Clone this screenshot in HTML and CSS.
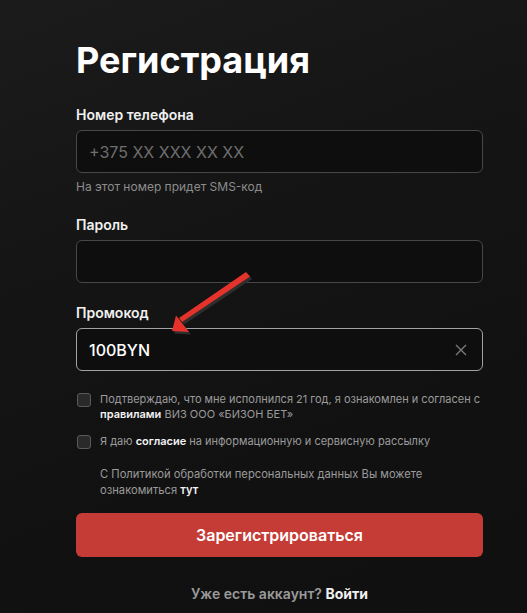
FILE: index.html
```html
<!DOCTYPE html>
<html lang="ru">
<head>
<meta charset="utf-8">
<title>Регистрация</title>
<link rel="stylesheet" href="styles.css">
</head>
<body>
<main class="page">
  <form class="form">
    <h1 class="title">Регистрация</h1>

    <div class="field">
      <label class="label">Номер телефона</label>
      <div class="input"><span class="placeholder">+375 XX XXX XX XX</span></div>
      <p class="hint">На этот номер придет SMS-код</p>
    </div>

    <div class="field">
      <label class="label">Пароль</label>
      <div class="input"></div>
    </div>

    <div class="field">
      <label class="label">Промокод</label>
      <div class="input input-active">
        <span class="value">100BYN</span>
        <svg class="clear" width="14" height="14" viewBox="0 0 14 14"><path d="M2 2L12 12M12 2L2 12" stroke="#7a7a7a" stroke-width="1.4" fill="none"/></svg>
      </div>
    </div>

    <div class="checks">
      <div class="check">
        <span class="box"></span>
        <p class="check-text">Подтверждаю, что мне исполнился 21 год, я ознакомлен и согласен с <b>правилами</b> ВИЗ ООО «БИЗОН БЕТ»</p>
      </div>
      <div class="check">
        <span class="box"></span>
        <p class="check-text">Я даю <b>согласие</b> на информационную и сервисную рассылку</p>
      </div>
      <p class="policy">С Политикой обработки персональных данных Вы можете ознакомиться <b>тут</b></p>
    </div>

    <button type="button" class="submit">Зарегистрироваться</button>

    <p class="login">Уже есть аккаунт? <b>Войти</b></p>
  </form>

  <svg class="arrow" width="527" height="613" viewBox="0 0 527 613">
    <g transform="translate(2,2.5)" fill="#2e2e2e">
      <path d="M246 272 L250 276.5 L182 322 L179 318 Z"/>
      <path d="M172 331 L176 315.5 L189 332 Z"/>
    </g>
    <g fill="#e5332c">
      <path d="M246 272 L250 276.5 L182 322 L179 318 Z"/>
      <path d="M172 331 L176 315.5 L189 332 Z"/>
    </g>
  </svg>
</main>
</body>
</html>
```
FILE: styles.css
```css
* { box-sizing: border-box; }
html, body { margin: 0; padding: 0; }
body {
  background: linear-gradient(160deg, #1b1b1b 0%, #151515 35%, #111111 70%, #101010 100%);
  font-family: Inter, "Noto Sans", "DejaVu Sans", sans-serif;
  color: #f2f2f2;
  min-height: 613px;
}
.page {
  position: relative;
  width: 527px;
  height: 613px;
  overflow: hidden;
}
.form {
  width: 407px;
  margin-left: 76px;
  padding-top: 38px;
  display: flex;
  flex-direction: column;
}
.title {
  margin: 0 0 23px;
  font-size: 36px;
  line-height: 44px;
  font-weight: 700;
  color: #ffffff;
}
.field {
  display: flex;
  flex-direction: column;
  margin-bottom: 20px;
}
.label {
  font-size: 14px;
  line-height: 20px;
  font-weight: 600;
  color: #f0f0f0;
  margin-bottom: 5px;
}
.input {
  height: 43px;
  border: 1px solid #474747;
  border-radius: 6px;
  background: #0e0e0e;
  display: flex;
  align-items: center;
  padding: 0 14px 0 12px;
  font-size: 16px;
}
.input-active { border-color: #a3a3a3; }
.placeholder { color: #6e6e6e; }
.value { color: #ffffff; flex: 1; font-weight: 500; }
.clear { display: block; }
.hint {
  margin: 6px 0 0;
  font-size: 12px;
  line-height: 16px;
  color: #8c8c8c;
}
.checks {
  display: flex;
  flex-direction: column;
  margin-top: 1px;
}
.check {
  display: flex;
  align-items: flex-start;
  gap: 9px;
  margin-bottom: 12px;
}
.box {
  flex: none;
  width: 14px;
  height: 14px;
  margin-top: 1px;
  margin-left: 1px;
  border: 1px solid #5a5a5a;
  border-radius: 3px;
  background: #2a2a2a;
}
.check-text {
  margin: 0;
  font-size: 11px;
  line-height: 15px;
  color: #9b9b9b;
}
.policy {
  margin: 5px 0 0 24px;
  font-size: 11.2px;
  line-height: 16px;
  color: #9b9b9b;
}
.check-text b, .policy b { color: #f2f2f2; font-weight: 600; }
.submit {
  margin-top: 15px;
  height: 44px;
  border: none;
  border-radius: 6px;
  background: #c43c35;
  color: #ffffff;
  font-family: inherit;
  font-size: 16px;
  font-weight: 600;
}
.login {
  margin: 28px 0 0;
  text-align: center;
  font-size: 14px;
  line-height: 18px;
  color: #9a9a9a;
  font-weight: 600;
}
.login b { color: #f0f0f0; font-weight: 700; }
.arrow {
  position: absolute;
  left: 0;
  top: 0;
  pointer-events: none;
}
```
